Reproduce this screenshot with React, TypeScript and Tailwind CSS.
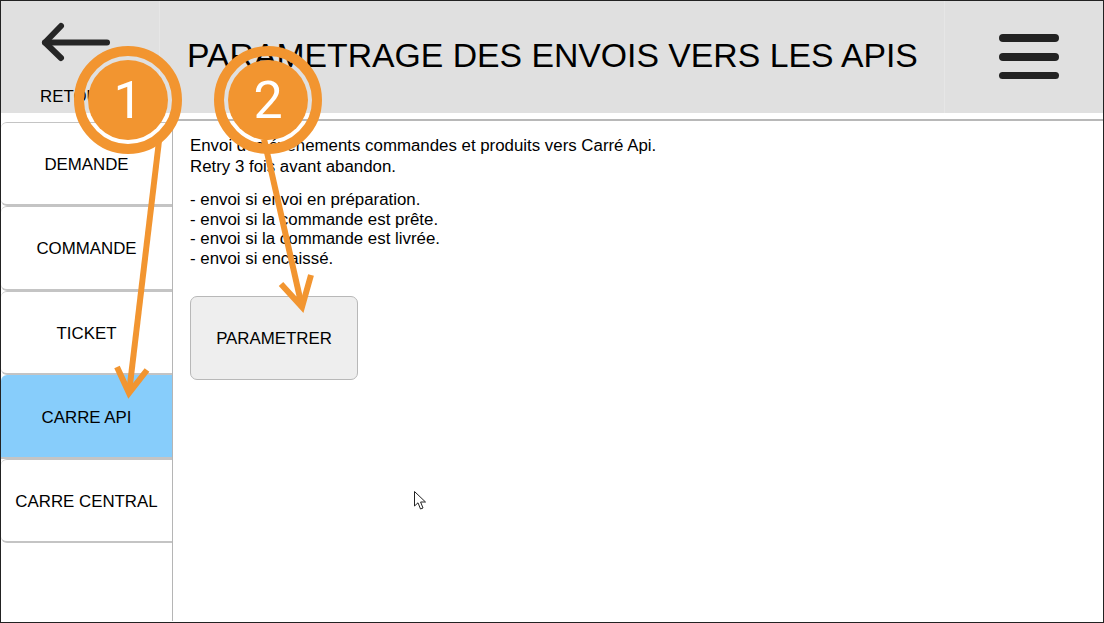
import React from "react";

const items = ["DEMANDE", "COMMANDE", "TICKET", "CARRE API", "CARRE CENTRAL"];

function Badge({ n, className }: { n: string; className: string }) {
  return (
    <div className={"absolute w-[108px] h-[108px] rounded-full border-[10px] border-[#f29530] p-[4px] " + className}>
      <div className="w-full h-full rounded-full bg-[#f29530] flex items-center justify-center pt-[2px]">
        <span className="text-white text-[52px] leading-none" style={{ fontFamily: "Roboto, sans-serif" }}>{n}</span>
      </div>
    </div>
  );
}

export default function App() {
  return (
    <div className="relative w-[1104px] h-[623px] overflow-hidden border border-[#222] bg-white text-black" style={{ fontFamily: '"Liberation Sans", Arial, sans-serif' }}>
      <header className="flex h-[112px] bg-[#e0e0e0]">
        <div className="w-[159px] shrink-0 border-r border-[#e6e6e6] flex flex-col pl-[39px]">
          <svg width="72" height="44" viewBox="0 0 72 44" className="mt-[20px] ml-[1px]" fill="none" stroke="#262626" strokeWidth="6" strokeLinecap="round" strokeLinejoin="round">
            <path d="M4 21.5H66" />
            <path d="M20 5L4 21.5L20 37" />
          </svg>
          <span className="mt-[22px] text-[16.85px] leading-[20px]">RETOUR</span>
        </div>
        <div className="w-[785px] shrink-0 border-r border-[#e6e6e6] pl-[27px] pt-[35px]">
          <h1 className="text-[33.75px] leading-[39px] whitespace-nowrap">PARAMETRAGE DES ENVOIS VERS LES APIS</h1>
        </div>
        <div className="flex-1 flex flex-col items-center pt-[33px] gap-[11px] pl-[10px]">
          <div className="w-[60px] h-[8px] rounded-full bg-[#222]" />
          <div className="w-[60px] h-[8px] rounded-full bg-[#222]" />
          <div className="w-[60px] h-[7px] rounded-full bg-[#222]" />
        </div>
      </header>
      <div className="flex h-[508px]">
        <aside className="w-[172px] shrink-0 border-r border-[#b5b5b5] pt-[9px] flex flex-col">
          {items.map((t) => (
            <div
              key={t}
              className={
                "h-[84.3px] flex items-center justify-center text-[16.85px] rounded-tl-[6px] " +
                (t === "CARRE API"
                  ? "bg-[#87cdfb] border-b-2 border-[#c4c4c4] pt-[3px]"
                  : "bg-white rounded-bl-[6px] border-t border-b-2 border-[#c4c4c4] pt-[2px]")
              }
            >
              {t}
            </div>
          ))}
        </aside>
        <main className="flex-1 min-w-0">
          <div className="mt-[6px] border-t-2 border-[#b8b8b8] pl-[17px] pt-[15px]">
            <p className="text-[16.85px] leading-[20.5px]">
              Envoi des événements commandes et produits vers Carré Api.
              <br />
              Retry 3 fois avant abandon.
            </p>
            <p className="mt-[13px] text-[16.85px] leading-[19.7px]">
              - envoi si envoi en préparation.
              <br />
              - envoi si la commande est prête.
              <br />
              - envoi si la commande est livrée.
              <br />
              - envoi si encaissé.
            </p>
            <button className="mt-[27px] w-[168px] h-[84px] pt-[2px] rounded-[7px] border border-[#b8b8b8] bg-[#eeeeee] text-[16.85px] block">
              PARAMETRER
            </button>
          </div>
        </main>
      </div>

      <svg className="absolute left-0 top-0 pointer-events-none" width="1104" height="623" fill="none" stroke="#f29530" strokeWidth="6">
        <path d="M158 140L128 392" />
        <path d="M116 366L128 392L146 369" />
        <path d="M263 138L301 306" />
        <path d="M280 283L301 306L310 274" />
      </svg>
      <Badge n="1" className="left-[73px] top-[45px]" />
      <Badge n="2" className="left-[213px] top-[45px]" />
      <svg className="absolute left-[412px] top-[489px]" width="14" height="21" viewBox="0 0 14 21" fill="#fff" stroke="#222" strokeWidth="1">
        <path d="M1.5 1.5V16L5 12.8L7.5 19L10 18L7.6 12H12.5Z" />
      </svg>
    </div>
  );
}
